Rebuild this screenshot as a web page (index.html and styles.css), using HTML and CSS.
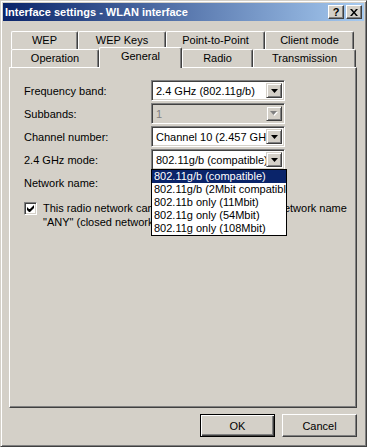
FILE: index.html
```html
<!DOCTYPE html>
<html lang="en">
<head>
    <meta charset="UTF-8">
    <title>Interface settings - WLAN interface</title>
    <link rel="stylesheet" href="styles.css">
</head>
<body>
    <div class="window">
        <div class="titlebar">
            <span class="title">Interface settings - WLAN interface</span>
            <div class="caption-buttons">
                <span class="cap-btn help">?</span>
                <span class="cap-btn">
                    <svg width="8" height="7" viewBox="0 0 8 7"><path d="M0 0h2l2 2.5 2-2.5h2l-3 3.5 3 3.5h-2l-2-2.5-2 2.5h-2l3-3.5z" fill="#000"/></svg>
                </span>
            </div>
        </div>
        <div class="dialog">
            <div class="tabs">
                <div class="tab-row">
                    <div class="tab" style="width: 67px">WEP</div>
                    <div class="tab" style="width: 88px">WEP Keys</div>
                    <div class="tab" style="width: 99px">Point-to-Point</div>
                    <div class="tab" style="width: 89px">Client mode</div>
                </div>
                <div class="tab-row">
                    <div class="tab" style="width: 88px">Operation</div>
                    <div class="tab active" style="width: 83px">General</div>
                    <div class="tab" style="width: 71px">Radio</div>
                    <div class="tab" style="width: 103px">Transmission</div>
                </div>
            </div>
            <div class="panel">
                <div class="field">
                    <span class="label">Frequency band:</span>
                    <div class="combo">
                        <span class="value">2.4 GHz (802.11g/b)</span>
                        <span class="drop"><svg width="7" height="4" viewBox="0 0 7 4"><path d="M0 0h7l-3.5 4z"/></svg></span>
                    </div>
                </div>
                <div class="field">
                    <span class="label">Subbands:</span>
                    <div class="combo disabled">
                        <span class="value">1</span>
                        <span class="drop"><svg width="8" height="5" viewBox="0 0 8 5"><path d="M1 1h7l-3.5 4z" fill="#fff"/><path d="M0 0h7l-3.5 4z"/></svg></span>
                    </div>
                </div>
                <div class="field">
                    <span class="label">Channel number:</span>
                    <div class="combo">
                        <span class="value">Channel 10 (2.457 GHz)</span>
                        <span class="drop"><svg width="7" height="4" viewBox="0 0 7 4"><path d="M0 0h7l-3.5 4z"/></svg></span>
                    </div>
                </div>
                <div class="field">
                    <span class="label">2.4 GHz mode:</span>
                    <div class="combo open">
                        <span class="value">802.11g/b (compatible)</span>
                        <span class="drop"><svg width="7" height="4" viewBox="0 0 7 4"><path d="M0 0h7l-3.5 4z"/></svg></span>
                        <ul class="dropdown">
                            <li class="selected">802.11g/b (compatible)</li>
                            <li>802.11g/b (2Mbit compatible)</li>
                            <li>802.11b only (11Mbit)</li>
                            <li>802.11g only (54Mbit)</li>
                            <li>802.11g only (108Mbit)</li>
                        </ul>
                    </div>
                </div>
                <div class="field">
                    <span class="label">Network name:</span>
                    <div class="textbox"></div>
                </div>
                <div class="check-row">
                    <span class="checkbox">
                        <svg width="7" height="7" viewBox="0 0 7 7"><path d="M0 2v3l2 2h1l4-4v-3l-4 4h-1z"/></svg>
                    </span>
                    <span class="check-label">This radio network cannot be accessed with the network name "ANY" (closed network)</span>
                </div>
            </div>
            <div class="actions">
                <button class="btn default">OK</button>
                <button class="btn">Cancel</button>
            </div>
        </div>
    </div>
</body>
</html>
```

FILE: styles.css
```css
body {
    margin: 0;
    font-family: "Liberation Sans", Arial, sans-serif;
    font-size: 11px;
    color: #000;
    background: #d4d0c8;
}
.window {
    width: 367px;
    height: 447px;
    box-sizing: border-box;
    background: #d4d0c8;
    border: 1px solid;
    border-color: #d4d0c8 #404040 #404040 #d4d0c8;
    box-shadow: inset 1px 1px #fff, inset -1px -1px #808080;
    padding: 2px;
}
.titlebar {
    height: 18px;
    display: flex;
    align-items: center;
    justify-content: space-between;
    padding-left: 2px;
    background: linear-gradient(to right, #0a246a, #a6caf0);
}
.title {
    color: white;
    font-weight: bold;
    font-size: 11px;
    white-space: nowrap;
}
.caption-buttons {
    display: flex;
    gap: 2px;
    margin-right: 2px;
}
.cap-btn {
    width: 16px;
    height: 14px;
    box-sizing: border-box;
    background: #d4d0c8;
    border: 1px solid;
    border-color: #fff #404040 #404040 #fff;
    box-shadow: inset -1px -1px #808080;
    display: flex;
    align-items: center;
    justify-content: center;
}
.cap-btn.help {
    font-weight: bold;
    font-size: 11px;
    line-height: 12px;
}
.dialog {
    padding: 10px 7px 0 6px;
}
.tabs {
    margin-left: 2px;
}
.tab-row {
    display: flex;
    height: 18px;
}
.tab {
    box-sizing: border-box;
    height: 18px;
    border-top: 1px solid #fff;
    border-left: 1px solid #fff;
    border-right: 1px solid #404040;
    border-radius: 2px 2px 0 0;
    box-shadow: inset -1px 0 #808080;
    background: #d4d0c8;
    text-align: center;
    line-height: 17px;
}
.tab.active {
    height: 21px;
    margin-top: -2px;
    line-height: 17px;
    position: relative;
    z-index: 2;
}
.panel {
    position: relative;
    height: 341px;
    box-sizing: border-box;
    border: 1px solid;
    border-color: #fff #404040 #404040 #fff;
    box-shadow: inset -1px -1px #808080;
    padding: 12px 0 0 14px;
}
.field {
    display: flex;
    align-items: center;
    height: 21px;
    margin-bottom: 2px;
}
.label {
    width: 127px;
}
.combo {
    position: relative;
    width: 134px;
    height: 21px;
    box-sizing: border-box;
    border: 1px solid;
    border-color: #808080 #fff #fff #808080;
    box-shadow: inset 1px 1px #404040, inset -1px -1px #d4d0c8;
    background: white;
    padding: 2px;
    display: flex;
}
.combo .value {
    flex: 1;
    padding-left: 2px;
    white-space: nowrap;
    overflow: hidden;
    line-height: 16px;
}
.combo .drop {
    width: 16px;
    box-sizing: border-box;
    background: #d4d0c8;
    border: 1px solid;
    border-color: #d4d0c8 #404040 #404040 #d4d0c8;
    box-shadow: inset 1px 1px #fff, inset -1px -1px #808080;
    display: flex;
    align-items: center;
    justify-content: center;
}
.combo.disabled {
    background: #d4d0c8;
}
.combo.disabled .value {
    color: #808080;
}
.combo.disabled svg path:last-child {
    fill: #808080;
}
.textbox {
    width: 134px;
    height: 21px;
    box-sizing: border-box;
    border: 1px solid;
    border-color: #808080 #fff #fff #808080;
    box-shadow: inset 1px 1px #404040;
    background: white;
}
.dropdown {
    position: absolute;
    left: -1px;
    top: 100%;
    z-index: 3;
    width: 136px;
    box-sizing: border-box;
    margin: 0;
    padding: 0;
    list-style: none;
    background: white;
    border: 1px solid #000;
}
.dropdown li {
    height: 13px;
    line-height: 13px;
    padding-left: 2px;
    white-space: nowrap;
    overflow: hidden;
}
.dropdown li.selected {
    background: #0a246a;
    color: white;
}
.check-row {
    display: flex;
    margin-top: 8px;
    gap: 6px;
}
.checkbox {
    flex: none;
    width: 13px;
    height: 13px;
    box-sizing: border-box;
    margin-top: 1px;
    border: 1px solid;
    border-color: #808080 #fff #fff #808080;
    box-shadow: inset 1px 1px #404040, inset -1px -1px #d4d0c8;
    background: white;
    display: flex;
    align-items: center;
    justify-content: center;
}
.check-label {
    width: 305px;
    line-height: 14px;
}
.actions {
    display: flex;
    justify-content: flex-end;
    gap: 7px;
    margin-top: 6px;
}
.btn {
    width: 75px;
    height: 23px;
    box-sizing: border-box;
    padding: 0;
    font-family: inherit;
    font-size: 11px;
    color: #000;
    background: #d4d0c8;
    border: 1px solid;
    border-color: #fff #404040 #404040 #fff;
    box-shadow: inset -1px -1px #808080;
}
.btn.default {
    border-color: #000;
    box-shadow: inset 1px 1px #fff, inset -1px -1px #404040, inset -2px -2px #808080;
}
```
